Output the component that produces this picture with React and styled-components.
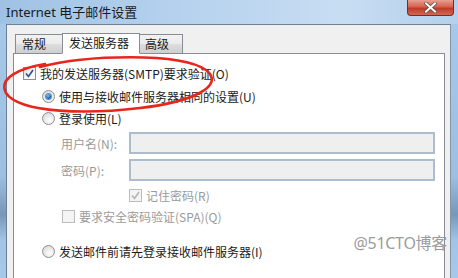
import React from "react";
import styled, { createGlobalStyle } from "styled-components";

const GlobalStyle = createGlobalStyle`
  html, body {
    margin: 0;
    padding: 0;
    width: 458px;
    height: 278px;
    overflow: hidden;
    background: #f0f0f0;
  }
  body {
    font-family: "Noto Sans", "Noto Sans CJK SC", sans-serif;
    font-size: 12px;
    color: #1e1e1e;
  }
`;

const Window = styled.div`
  position: relative;
  width: 458px;
  height: 278px;
  display: flex;
  flex-direction: column;
  overflow: hidden;
  background: linear-gradient(90deg, #9fc2e4 0%, #b6d2ee 40%, #c7ddf2 75%, #b4d0ec 100%);
`;

const TitleBar = styled.div`
  height: 24px;
  display: flex;
  align-items: center;
  justify-content: space-between;
  padding-left: 6px;
  padding-right: 4px;
  flex-shrink: 0;
`;

const Title = styled.div`
  font-family: "Noto Sans", "Noto Sans CJK SC", sans-serif;
  font-size: 13px;
  line-height: 16px;
  color: #1a1a1a;
  margin-top: -1px;
`;

const CloseBtn = styled.div`
  align-self: flex-start;
  width: 45px;
  height: 15px;
  border: 1px solid #7a2a22;
  border-top: none;
  border-radius: 0 0 4px 4px;
  background: linear-gradient(180deg, #e8a093 0%, #d5634f 45%, #c0392a 55%, #d4674f 100%);
  display: flex;
  align-items: center;
  justify-content: center;
  svg {
    display: block;
  }
`;

const Body = styled.div`
  flex: 1;
  display: flex;
`;

const Frame = styled.div`
  width: ${(p) => p.$w}px;
  flex-shrink: 0;
  background: linear-gradient(180deg, #a6c8e9 0%, #9cbfe2 60%, #7797b8 75%, #a2c4e6 85%, #a6c8e9 100%);
`;

const Dialog = styled.div`
  flex: 1;
  background: #f0f0f0;
  border-left: 1px solid #6f8094;
  border-top: 1px solid #6f8094;
  border-right: 1px solid #8296ab;
  padding: 7px 5px 0 6px;
  display: flex;
  flex-direction: column;
`;

const TabRow = styled.div`
  display: flex;
  align-items: flex-end;
  height: 21px;
  padding-left: 2px;
  position: relative;
  z-index: 1;
`;

const Tab = styled.div`
  width: ${(p) => p.$w}px;
  height: ${(p) => (p.$active ? 21 : 19)}px;
  padding-left: ${(p) => (p.$active ? 6 : 6)}px;
  margin: 0 ${(p) => (p.$active ? -2 : 0)}px;
  border: 1px solid #898c95;
  border-bottom: ${(p) => (p.$active ? "1px solid #ffffff" : "none")};
  box-sizing: border-box;
  background: ${(p) =>
    p.$active ? "#ffffff" : "linear-gradient(180deg, #f2f2f2 0%, #ebebeb 50%, #dddddd 51%, #cfcfcf 100%)"};
  font-family: "Noto Sans CJK SC", sans-serif;
  font-size: 12px;
  line-height: ${(p) => (p.$active ? 18 : 18)}px;
  color: #1a1a1a;
  position: relative;
  z-index: ${(p) => (p.$active ? 2 : 1)};
  margin-bottom: ${(p) => (p.$active ? -1 : 0)}px;
`;

const Panel = styled.div`
  flex: 1;
  background: #ffffff;
  border: 1px solid #898c95;
  border-bottom: none;
  display: flex;
  flex-direction: column;
  padding-top: 9px;
`;

const Row = styled.div`
  display: flex;
  align-items: center;
  height: ${(p) => p.$h || 20}px;
  margin-top: ${(p) => p.$mt || 0}px;
  padding-left: ${(p) => p.$indent}px;
  font-family: "Noto Sans CJK SC", sans-serif;
  font-size: 12px;
  color: ${(p) => (p.$disabled ? "#9a9a9a" : "#1a1a1a")};
  white-space: nowrap;
`;

const Label = styled.span`
  width: 68px;
  flex-shrink: 0;
`;

const Field = styled.div`
  width: 306px;
  height: 22px;
  box-sizing: border-box;
  border: 2px solid #aebcd0;
  background: #efefef;
`;

const Box = styled.span`
  width: 13px;
  height: 13px;
  box-sizing: border-box;
  border: 1px solid ${(p) => (p.$disabled ? "#bcbcbc" : "#8e8f8f")};
  background: ${(p) => (p.$disabled ? "#f4f4f4" : "linear-gradient(135deg, #dcdcdc 0%, #f7f7f7 60%, #ffffff 100%)")};
  margin-right: 4px;
  flex-shrink: 0;
  display: flex;
  align-items: center;
  justify-content: center;
`;

const Radio = styled.span`
  width: 13px;
  height: 13px;
  box-sizing: border-box;
  border-radius: 50%;
  border: 1px solid #8e8f8f;
  background: radial-gradient(circle at 60% 65%, #ffffff 0%, #e6e6e6 55%, #cfcfcf 100%);
  margin-right: 4px;
  flex-shrink: 0;
  display: flex;
  align-items: center;
  justify-content: center;

  &::after {
    content: "";
    display: ${(p) => (p.$checked ? "block" : "none")};
    width: 5px;
    height: 5px;
    border-radius: 50%;
    background: radial-gradient(circle at 40% 35%, #7fc3f2 0%, #1a66b5 60%, #0b3f82 100%);
    box-shadow: 0 0 0 1px #5b90c8;
  }
`;

const Watermark = styled.div`
  position: absolute;
  right: 11px;
  top: 233px;
  font-family: "Noto Sans", "Noto Sans CJK SC", sans-serif;
  font-size: 16px;
  line-height: 20px;
  color: #9c9c9c;
  letter-spacing: -0.3px;
`;

const Annotation = styled.svg`
  position: absolute;
  left: 0;
  top: 0;
  pointer-events: none;
`;

const Check = ({ color }) => (
  <svg width="9" height="9" viewBox="0 0 9 9">
    <path d="M1 4.5 L3.5 7.5 L8 1" fill="none" stroke={color} strokeWidth="1.6" />
  </svg>
);

const CheckBox = ({ checked, disabled }) => (
  <Box $disabled={disabled}>{checked && <Check color={disabled ? "#b4b4b4" : "#2c4d8e"} />}</Box>
);

export default function App() {
  return (
    <>
      <GlobalStyle />
      <Window>
        <TitleBar>
          <Title>Internet 电子邮件设置</Title>
          <CloseBtn>
            <svg width="13" height="11" viewBox="0 0 13 11">
              <path d="M2 1.5 L11 9.5 M11 1.5 L2 9.5" stroke="#4a4a4a" strokeWidth="3.4" strokeLinecap="square" />
              <path d="M2 1.5 L11 9.5 M11 1.5 L2 9.5" stroke="#ffffff" strokeWidth="2" strokeLinecap="square" />
            </svg>
          </CloseBtn>
        </TitleBar>
        <Body>
          <Frame $w={6} />
          <Dialog>
            <TabRow>
              <Tab $w={49}>常规</Tab>
              <Tab $w={78} $active>发送服务器</Tab>
              <Tab $w={45}>高级</Tab>
            </TabRow>
            <Panel>
              <Row $indent={9}>
                <CheckBox checked />
                我的发送服务器(SMTP)要求验证(O)
              </Row>
              <Row $indent={28} $mt={3}>
                <Radio $checked />
                使用与接收邮件服务器相同的设置(U)
              </Row>
              <Row $indent={28} $mt={2}>
                <Radio />
                登录使用(L)
              </Row>
              <Row $indent={47} $mt={4} $h={22} $disabled>
                <Label>用户名(N):</Label>
                <Field />
              </Row>
              <Row $indent={47} $mt={5} $h={22} $disabled>
                <Label>密码(P):</Label>
                <Field />
              </Row>
              <Row $indent={115} $mt={4} $disabled>
                <CheckBox checked disabled />
                记住密码(R)
              </Row>
              <Row $indent={48} $mt={1} $disabled>
                <CheckBox disabled />
                要求安全密码验证(SPA)(Q)
              </Row>
              <Row $indent={28} $mt={15}>
                <Radio />
                发送邮件前请先登录接收邮件服务器(I)
              </Row>
            </Panel>
          </Dialog>
          <Frame $w={7} />
        </Body>
        <Watermark>@51CTO博客</Watermark>
        <Annotation width="458" height="278" viewBox="0 0 458 278">
          <path
            d="M40 67 C 85 55, 180 52, 206 70 C 226 86, 192 102, 140 108 C 90 114, 20 114, 6 93 C -2 78, 20 68, 45 64"
            fill="none"
            stroke="#e8261c"
            strokeWidth="2.6"
            strokeLinecap="round"
          />
        </Annotation>
      </Window>
    </>
  );
}
